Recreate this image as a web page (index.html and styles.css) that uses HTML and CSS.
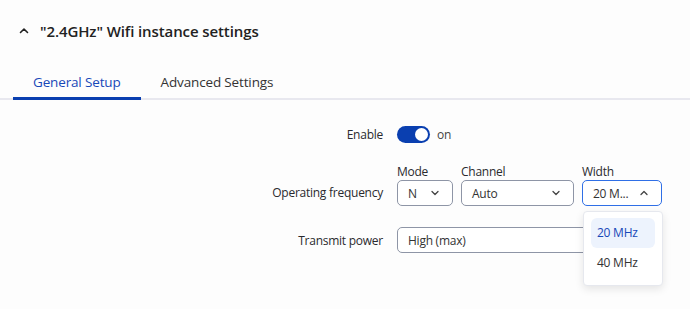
FILE: index.html
```html
<!DOCTYPE html>
<html lang="en">
<head>
    <meta charset="UTF-8">
    <meta name="viewport" content="width=device-width, initial-scale=1.0">
    <title>Wifi instance settings</title>
    <link rel="stylesheet" href="styles.css">
</head>
<body>
    <div class="section">
        <div class="section-header">
            <svg class="chevron" width="10" height="10" viewBox="0 0 10 10">
                <path d="M1.5 6.5 L5 3 L8.5 6.5" fill="none" stroke="#222" stroke-width="1.6" stroke-linecap="round" stroke-linejoin="round"/>
            </svg>
            <h2>"2.4GHz" Wifi instance settings</h2>
        </div>

        <div class="tabs">
            <div class="tab active">General Setup</div>
            <div class="tab">Advanced Settings</div>
        </div>

        <div class="form">
            <div class="row">
                <div class="label">Enable</div>
                <div class="field">
                    <div class="toggle"><div class="knob"></div></div>
                    <span class="toggle-text">on</span>
                </div>
            </div>

            <div class="row row-multi">
                <div class="label">Operating frequency</div>
                <div class="field multi">
                    <div class="sub">
                        <div class="sub-label">Mode</div>
                        <div class="select w-mode">
                            <span>N</span>
                            <svg width="10" height="10" viewBox="0 0 10 10"><path d="M2 3.5 L5 6.5 L8 3.5" fill="none" stroke="#444" stroke-width="1.3" stroke-linecap="round" stroke-linejoin="round"/></svg>
                        </div>
                    </div>
                    <div class="sub">
                        <div class="sub-label">Channel</div>
                        <div class="select w-channel">
                            <span>Auto</span>
                            <svg width="10" height="10" viewBox="0 0 10 10"><path d="M2 3.5 L5 6.5 L8 3.5" fill="none" stroke="#444" stroke-width="1.3" stroke-linecap="round" stroke-linejoin="round"/></svg>
                        </div>
                    </div>
                    <div class="sub dropdown-wrap">
                        <div class="sub-label">Width</div>
                        <div class="select w-width focused">
                            <span>20 M...</span>
                            <svg width="10" height="10" viewBox="0 0 10 10"><path d="M2 6.5 L5 3.5 L8 6.5" fill="none" stroke="#444" stroke-width="1.3" stroke-linecap="round" stroke-linejoin="round"/></svg>
                        </div>
                        <div class="menu">
                            <div class="option selected">20 MHz</div>
                            <div class="option">40 MHz</div>
                        </div>
                    </div>
                </div>
            </div>

            <div class="row">
                <div class="label">Transmit power</div>
                <div class="field">
                    <div class="select w-power">
                        <span>High (max)</span>
                    </div>
                </div>
            </div>
        </div>
    </div>
</body>
</html>
```

FILE: styles.css
```css
body {
    font-family: 'Open Sans', 'Noto Sans', sans-serif;
    margin: 0;
    padding: 0;
    min-height: 309px;
    background: #fdfdfd;
    color: #2a2a2e;
    font-size: 12px;
    letter-spacing: -0.25px;
}

.section {
    padding-top: 20px;
    padding-bottom: 40px;
}

.section-header {
    display: flex;
    align-items: center;
    padding-left: 19px;
    height: 22px;
}

.chevron {
    margin-right: 11px;
}

.section-header h2 {
    margin: 0;
    font-size: 15px;
    font-weight: 600;
    letter-spacing: -0.1px;
    color: #222;
}

.tabs {
    display: flex;
    margin-top: 25px;
    padding-left: 13px;
    border-bottom: 2px solid #e8e8ef;
}

.tab {
    font-size: 13.5px;
    letter-spacing: -0.15px;
    padding: 6px 20px 6px;
    color: #333;
    margin-bottom: -2px;
    border-bottom: 3px solid transparent;
}

.tab.active {
    color: #1848b8;
    border-bottom-color: #0a3fb0;
}

.form {
    display: flex;
    flex-direction: column;
    padding-top: 26px;
}

.row {
    display: grid;
    grid-template-columns: 383px auto;
    column-gap: 14px;
    align-items: center;
    margin-bottom: 20px;
}

.row-multi {
    align-items: end;
    margin-bottom: 21px;
}

.row-multi .label {
    height: 26px;
    line-height: 26px;
}

.label {
    text-align: right;
    color: #2a2a2e;
}

.field {
    display: flex;
    align-items: center;
}

.toggle {
    width: 33px;
    height: 17px;
    border-radius: 9px;
    background: #0a3fb0;
    position: relative;
}

.knob {
    position: absolute;
    right: 2px;
    top: 2px;
    width: 13px;
    height: 13px;
    border-radius: 50%;
    background: #fff;
}

.toggle-text {
    margin-left: 7px;
    color: #444;
}

.multi {
    gap: 8px;
    align-items: flex-end;
}

.sub-label {
    margin-bottom: 0;
    color: #2a2a2e;
}

.select {
    height: 26px;
    box-sizing: border-box;
    border: 1px solid #8e95a6;
    border-radius: 5px;
    display: flex;
    align-items: center;
    justify-content: space-between;
    padding: 0 12px 0 10px;
    background: #fff;
    color: #333;
}

.select.focused {
    border-color: #2f6fe6;
}

.w-mode { width: 56px; }
.w-channel { width: 113px; }
.w-width { width: 80px; }
.w-power { width: 200px; }

.dropdown-wrap {
    position: relative;
}

.menu {
    position: absolute;
    top: 48px;
    left: 1px;
    width: 80px;
    box-sizing: border-box;
    background: #fff;
    border: 1px solid #e6e8ee;
    border-radius: 4px;
    box-shadow: 0 3px 8px rgba(0, 0, 0, 0.1);
    padding: 6px 7px 7px;
    z-index: 2;
}

.option {
    height: 30px;
    line-height: 30px;
    padding-left: 6px;
    border-radius: 6px;
    color: #333;
}

.option.selected {
    background: #edf3fd;
    color: #1848b8;
}
```
